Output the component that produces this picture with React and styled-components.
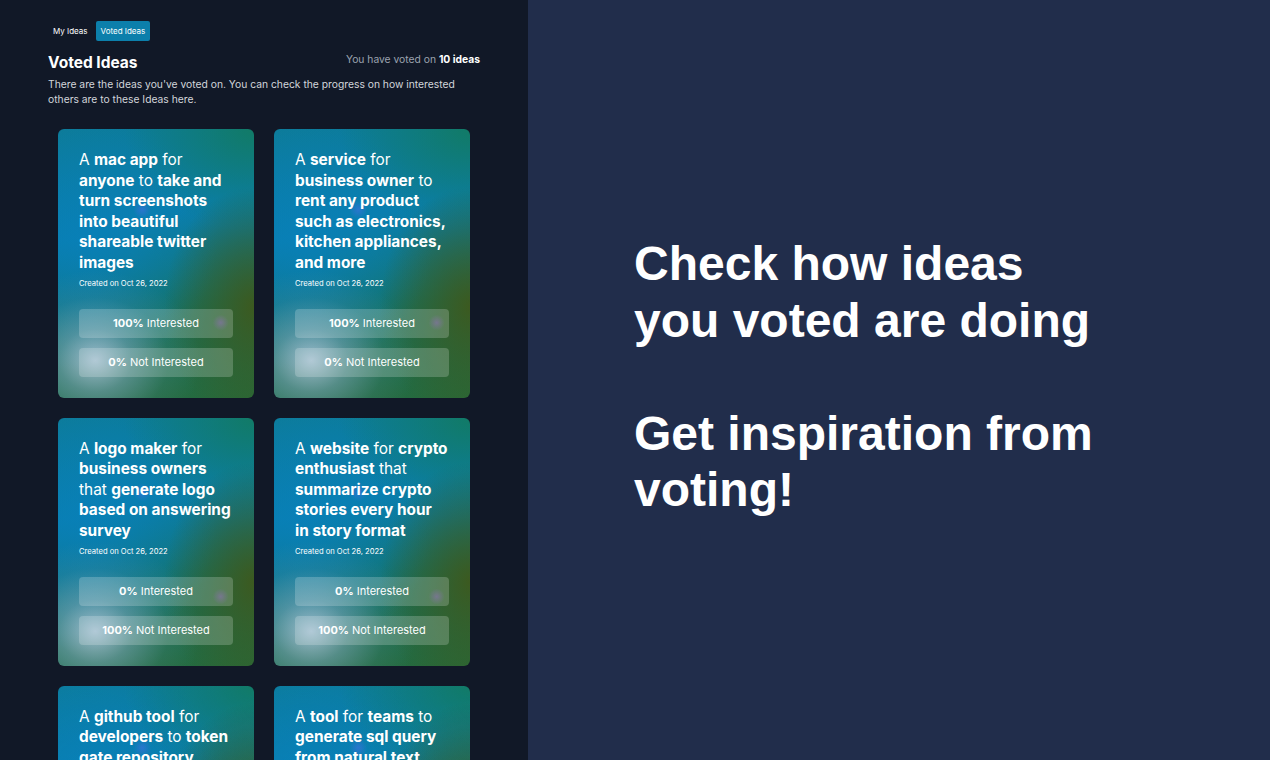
import styled, { createGlobalStyle } from "styled-components";

const Global = createGlobalStyle`
  html, body {
    margin: 0;
    padding: 0;
    height: 100%;
  }
  body {
    font-family: Inter, "Noto Sans", sans-serif;
    background: #111827;
  }
`;

const Page = styled.div`
  display: flex;
  width: 100%;
  height: 100vh;
  overflow: hidden;
`;

const Left = styled.div`
  width: 528px;
  flex-shrink: 0;
  background: #111827;
  padding: 21px 48px 0 48px;
  box-sizing: border-box;
  overflow: hidden;
  color: #ffffff;
`;

const Tabs = styled.div`
  display: flex;
  gap: 3px;
`;

const Tab = styled.button`
  border: none;
  border-radius: 2px;
  padding: 0 5px;
  height: 20px;
  font-family: Inter, sans-serif;
  font-size: 8px;
  color: #ffffff;
  background: ${(p) => (p.$active ? "#0c7fab" : "transparent")};
  cursor: pointer;
`;

const Header = styled.div`
  display: flex;
  justify-content: space-between;
  align-items: center;
  margin-top: 12px;
`;

const Title = styled.h1`
  margin: 0;
  font-size: 15.5px;
  font-weight: 700;
  line-height: 18px;
  margin-top: 1px;
`;

const Count = styled.span`
  font-size: 10.3px;
  color: #9ca3af;
  margin-top: -7px;

  b {
    color: #ffffff;
    font-weight: 700;
  }
`;

const Desc = styled.p`
  margin: 5px 0 0 0;
  font-size: 10.3px;
  line-height: 15px;
  color: #d1d5db;
`;

const Grid = styled.div`
  display: grid;
  grid-template-columns: repeat(2, 196px);
  column-gap: 20px;
  row-gap: 20px;
  margin: 22px 10px 0 10px;
  align-items: start;
`;

const Card = styled.div`
  border-radius: 6px;
  padding: 21px 21px 21px 21px;
  background:
    radial-gradient(circle 9px at 43% 30%, rgba(70, 110, 230, 0.55), transparent),
    radial-gradient(circle 8px at 83% 72%, rgba(100, 80, 140, 0.7), transparent),
    radial-gradient(ellipse 105px 90px at 19% 86%, rgba(196, 210, 236, 0.78) 0%, rgba(150, 180, 210, 0.45) 35%, rgba(120, 160, 190, 0.12) 70%, transparent 100%),
    radial-gradient(ellipse 90px 120px at 100% 66%, rgba(66, 86, 22, 0.85), transparent),
    radial-gradient(ellipse 130px 100px at 100% 0%, rgba(18, 122, 96, 0.9), transparent),
    radial-gradient(ellipse 130px 130px at 15% 42%, rgba(8, 128, 186, 0.8), transparent),
    linear-gradient(165deg, #0d7b97 0%, #0a7eac 35%, #17705a 68%, #27693a 100%);
`;

const Idea = styled.p`
  margin: 0;
  font-size: 15.4px;
  line-height: 20.6px;
  font-weight: 400;
  color: #ffffff;

  b {
    font-weight: 700;
  }
`;

const Created = styled.p`
  margin: 5px 0 0 0;
  font-size: 7.6px;
  line-height: 10px;
  color: #ffffff;
`;

const Votes = styled.div`
  display: flex;
  flex-direction: column;
  gap: 10px;
  margin-top: 20px;
`;

const Vote = styled.div`
  height: 29px;
  border-radius: 4px;
  background: rgba(255, 255, 255, 0.2);
  display: flex;
  align-items: center;
  justify-content: center;
  font-size: 11px;
  color: #ffffff;

  b {
    font-weight: 700;
    margin-right: 3px;
  }
`;

const Right = styled.div`
  flex: 1;
  background: #212d4b;
  display: flex;
  align-items: center;
  padding-left: 106px;
  padding-bottom: 5px;
`;

const Headline = styled.h2`
  margin: 0;
  font-family: "Liberation Sans", Arial, sans-serif;
  font-weight: 700;
  font-size: 48px;
  line-height: 56.5px;
  color: #ffffff;
`;

const ideas = [
  {
    text: [["A "], ["mac app", 1], [" for "], ["anyone", 1], [" to "], ["take and turn screenshots into beautiful shareable twitter images", 1]],
    yes: 100,
  },
  {
    text: [["A "], ["service", 1], [" for "], ["business owner", 1], [" to "], ["rent any product such as electronics, kitchen appliances, and more", 1]],
    yes: 100,
  },
  {
    text: [["A "], ["logo maker", 1], [" for "], ["business owners", 1], [" that "], ["generate logo based on answering survey", 1]],
    yes: 0,
  },
  {
    text: [["A "], ["website", 1], [" for "], ["crypto enthusiast", 1], [" that "], ["summarize crypto stories every hour in story format", 1]],
    yes: 0,
  },
  {
    text: [["A "], ["github tool", 1], [" for "], ["developers", 1], [" to "], ["token gate repository", 1]],
    yes: 100,
  },
  {
    text: [["A "], ["tool", 1], [" for "], ["teams", 1], [" to "], ["generate sql query from natural text", 1]],
    yes: 100,
  },
];

const IdeaCard = ({ idea }) => (
  <Card>
    <Idea>
      {idea.text.map(([t, bold], i) => (bold ? <b key={i}>{t}</b> : <span key={i}>{t}</span>))}
    </Idea>
    <Created>Created on Oct 26, 2022</Created>
    <Votes>
      <Vote>
        <b>{idea.yes}%</b> Interested
      </Vote>
      <Vote>
        <b>{100 - idea.yes}%</b> Not Interested
      </Vote>
    </Votes>
  </Card>
);

export default function App() {
  return (
    <>
      <Global />
      <Page>
        <Left>
          <Tabs>
            <Tab>My Ideas</Tab>
            <Tab $active>Voted Ideas</Tab>
          </Tabs>
          <Header>
            <Title>Voted Ideas</Title>
            <Count>
              You have voted on <b>10 ideas</b>
            </Count>
          </Header>
          <Desc>
            There are the ideas you've voted on. You can check the progress on how interested others are to these Ideas here.
          </Desc>
          <Grid>
            {ideas.map((idea, i) => (
              <IdeaCard key={i} idea={idea} />
            ))}
          </Grid>
        </Left>
        <Right>
          <Headline>
            Check how ideas
            <br />
            you voted are doing
            <br />
            <br />
            Get inspiration from
            <br />
            voting!
          </Headline>
        </Right>
      </Page>
    </>
  );
}
